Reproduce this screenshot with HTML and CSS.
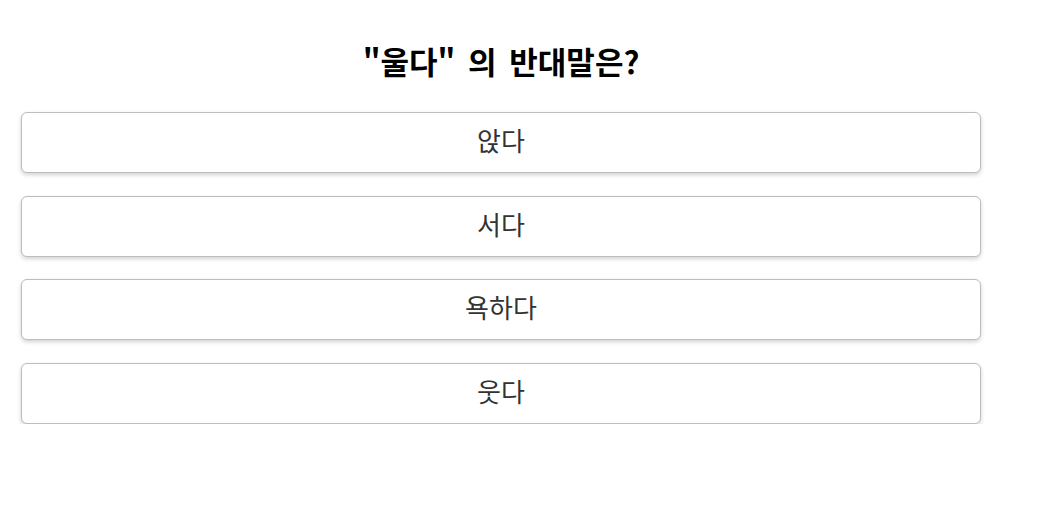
FILE: index.html
```html
<!DOCTYPE html>
<html lang="ko">
<head>
<meta charset="utf-8">
<link rel="stylesheet" href="styles.css">
</head>
<body>
<div class="quiz">
  <h2 class="question">"울다" 의 반대말은?</h2>
  <div class="options">
    <button class="option">앉다</button>
    <button class="option">서다</button>
    <button class="option">욕하다</button>
    <button class="option">웃다</button>
  </div>
</div>
</body>
</html>
```

FILE: styles.css
```css
html, body {
  margin: 0;
  padding: 0;
  background: #fff;
}
body {
  font-family: "Noto Sans CJK KR", "Noto Sans", sans-serif;
}
.quiz {
  width: 960px;
  padding: 40px 0 0 21px;
}
.question {
  margin: 0 0 30px;
  text-align: center;
  font-size: 31px;
  line-height: 42px;
  font-weight: 700;
  color: #000;
  word-spacing: 4px;
}
.options {
  display: flex;
  flex-direction: column;
  gap: 22.67px;
}
.option {
  box-sizing: border-box;
  width: 960px;
  height: 61px;
  background: #fff;
  border: 1px solid #bdbdbd;
  border-radius: 6px;
  box-shadow: 0 2px 4px rgba(0, 0, 0, 0.18);
  font-family: "Noto Sans CJK KR", "Noto Sans", sans-serif;
  font-size: 26px;
  line-height: 30px;
  color: #333;
  padding: 0 0 5px;
}
```
